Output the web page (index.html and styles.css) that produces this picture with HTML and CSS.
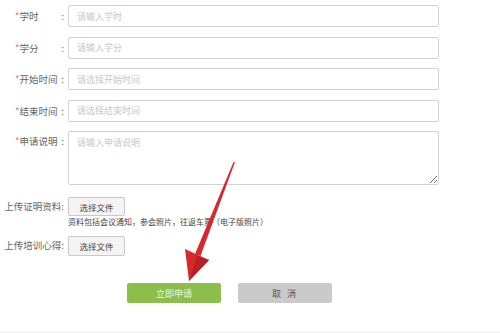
FILE: index.html
```html
<!DOCTYPE html>
<html lang="zh-CN">
<head>
    <meta charset="UTF-8">
    <meta name="viewport" content="width=device-width, initial-scale=1.0">
    <title>培训申请</title>
    <link rel="stylesheet" href="styles.css">
</head>
<body>
    <div class="page">
        <form class="apply-form">
            <div class="row">
                <label class="lbl"><span><i>*</i>学时</span><span>:</span></label>
                <input class="field" type="text" placeholder="请输入学时">
            </div>
            <div class="row">
                <label class="lbl"><span><i>*</i>学分</span><span>:</span></label>
                <input class="field" type="text" placeholder="请输入学分">
            </div>
            <div class="row">
                <label class="lbl"><span><i>*</i>开始时间</span><span>:</span></label>
                <input class="field" type="text" placeholder="请选择开始时间">
            </div>
            <div class="row">
                <label class="lbl"><span><i>*</i>结束时间</span><span>:</span></label>
                <input class="field" type="text" placeholder="请选择结束时间">
            </div>
            <div class="row row-top">
                <label class="lbl"><span><i>*</i>申请说明</span><span>:</span></label>
                <textarea class="field area" placeholder="请输入申请说明"></textarea>
            </div>

            <div class="row upload">
                <span class="lbl-up">上传证明资料:</span>
                <div class="upload-box">
                    <button type="button" class="file-btn">选择文件</button>
                    <p class="note">资料包括会议通知，参会照片，往返车票（电子版照片）</p>
                </div>
            </div>
            <div class="row upload upload-last">
                <span class="lbl-up">上传培训心得:</span>
                <button type="button" class="file-btn">选择文件</button>
            </div>

            <div class="actions">
                <button type="submit" class="btn-ok">立即申请</button>
                <button type="button" class="btn-cancel">取&nbsp;消</button>
            </div>
        </form>

        <!-- red annotation arrow drawn over the form -->
        <svg class="arrow" width="500" height="333" viewBox="0 0 500 333">
            <polygon points="235,162 233.5,162 195,254 200.5,256" fill="#d42a2e"/>
            <polygon points="185,249 209,260 189,281" fill="#d42a2e"/>
            <polygon points="189,281 197,256 209,260" fill="#b81f24"/>
        </svg>
    </div>
</body>
</html>
```

FILE: styles.css
```css
/* reset */
* {
    margin: 0;
    padding: 0;
    box-sizing: border-box;
}

body {
    font-family: "Noto Sans CJK SC", "Liberation Sans", sans-serif;
    background-color: #fff;
    color: #555;
}

.page {
    position: relative;
    width: 500px;
    height: 333px;
    border-bottom: 1px solid #eee;
    overflow: hidden;
}

.apply-form {
    padding-top: 5px;
}

.row {
    display: flex;
    align-items: center;
    margin-bottom: 9.5px;
}

.row-top {
    align-items: flex-start;
    margin-bottom: 12px;
}

.lbl {
    width: 49px;
    margin-left: 15px;
    margin-right: 4px;
    display: flex;
    justify-content: space-between;
    white-space: nowrap;
    font-size: 9.5px;
    line-height: 12px;
    color: #666;
}

.row-top .lbl {
    margin-top: 4px;
}

.lbl i {
    font-style: normal;
    color: #e67070;
}

.field {
    display: block;
    width: 371px;
    height: 22px;
    border: 1px solid #d2d2d2;
    border-radius: 2px;
    padding: 0 8px;
    font-family: inherit;
    font-size: 9px;
    color: #555;
    outline: none;
}

.field::placeholder {
    color: #c8c8c8;
}

.area {
    height: 54px;
    padding-top: 4px;
    resize: both;
}

.upload {
    align-items: flex-start;
    margin-bottom: 0;
}

.upload-last {
    margin-top: 8px;
}

.lbl-up {
    width: 64px;
    margin-right: 4px;
    text-align: right;
    white-space: nowrap;
    font-size: 9.5px;
    line-height: 19px;
    color: #666;
}

.file-btn {
    display: block;
    width: 57px;
    height: 19px;
    background-color: #f4f4f4;
    border: 1px solid #c9c9c9;
    border-radius: 2px;
    font-family: inherit;
    font-size: 8.5px;
    color: #444;
}

.upload-last .file-btn {
    height: 20px;
}

.note {
    font-size: 8px;
    line-height: 12px;
    color: #444;
    white-space: nowrap;
}

.actions {
    display: flex;
    gap: 17px;
    margin-top: 27px;
    padding-left: 127px;
}

.btn-ok,
.btn-cancel {
    width: 94px;
    height: 20px;
    border: none;
    border-radius: 2px;
    font-family: inherit;
    font-size: 9px;
}

.btn-ok {
    background-color: #8dbe4b; /* green submit */
    color: #eef6e0;
}

.btn-cancel {
    background-color: #cacaca;
    color: #555;
    letter-spacing: 2px;
}

.arrow {
    position: absolute;
    top: 0;
    left: 0;
    pointer-events: none;
}
```
